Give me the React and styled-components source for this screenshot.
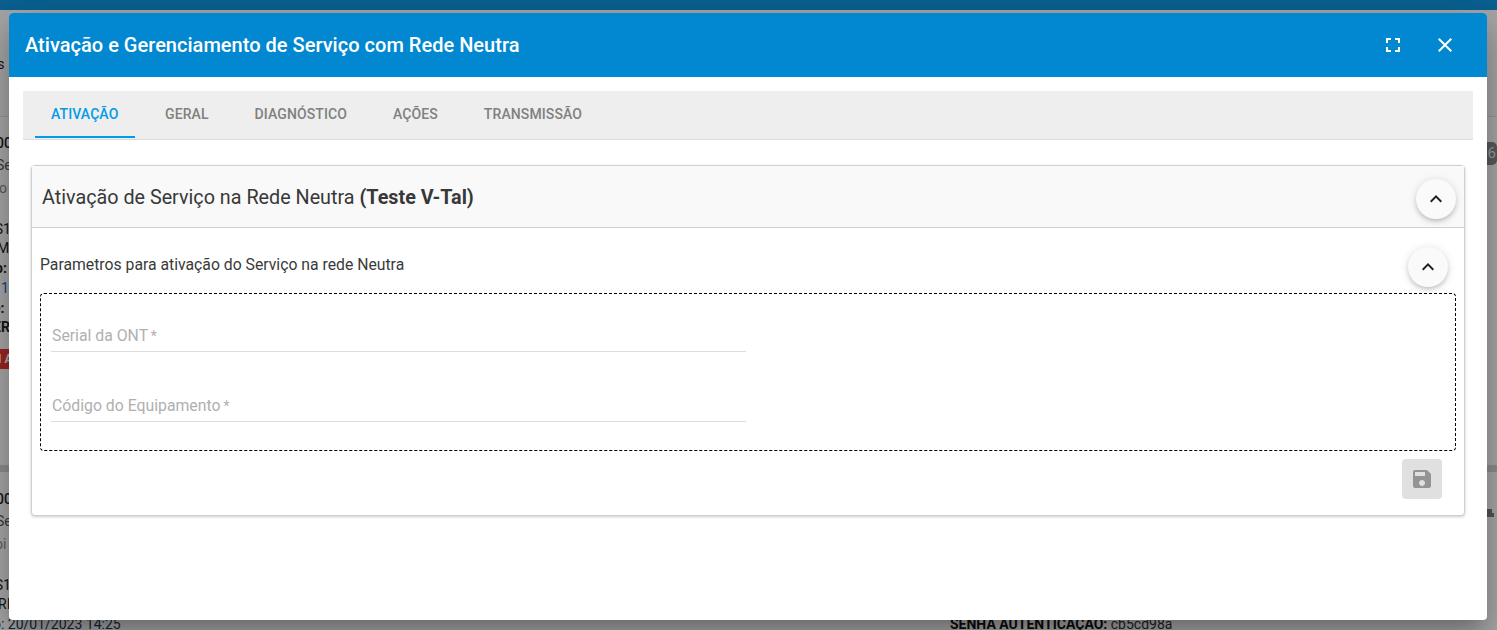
import React from "react";
import styled, { createGlobalStyle } from "styled-components";
import { MdFullscreen, MdClose, MdKeyboardArrowUp, MdSave } from "react-icons/md";

const Global = createGlobalStyle`
  html, body { margin: 0; padding: 0; height: 100%; background: #fff; overflow: hidden; }
  * { box-sizing: border-box; }
  body { font-family: Roboto, "Liberation Sans", sans-serif; }
`;

const Page = styled.div`
  position: relative;
  width: 1497px;
  height: 630px;
  overflow: hidden;
  display: flex;
  flex-direction: column;
  background: #fff;
  color: #222;
  font-size: 14px;
`;
const TopBar = styled.div`
  flex: 0 0 10px;
  background: #0f8fd6;
`;
const SubHeader = styled.div`
  flex: 0 0 107px;
  background: #f5f5f5;
  border-bottom: 1px solid #e0e0e0;
  padding-top: 45px;
`;
const ListCard = styled.div`
  position: relative;
  flex: 0 0 ${(p) => p.$h}px;
  padding-top: ${(p) => p.$pad}px;
  background: #f8f8f8;
`;
const Divider = styled.div`
  flex: 0 0 7px;
  background: #d2d2d2;
`;
const Line = styled.div`
  height: 18px;
  line-height: 18px;
  white-space: nowrap;
  margin-top: ${(p) => p.$mt || 0}px;
  margin-left: ${(p) => p.$shift || 0}px;
  color: ${(p) => p.$color || "#222"};
  font-weight: ${(p) => p.$weight || 400};
`;
const DateRow = styled(Line)`
  display: flex;
  color: #1b3a57;
  height: 18px;
`;
const Strong = styled.b`
  font-weight: 700;
  color: #111;
`;
const RightValue = styled.span`
  position: absolute;
  left: 950px;
  color: #333;
`;
const RedBadge = styled.div`
  margin-top: 13px;
  margin-left: -36px;
  width: 80px;
  height: 20px;
  line-height: 20px;
  background: #e53935;
  color: #fff;
  font-size: 12px;
  font-weight: 700;
  text-align: left;
  white-space: nowrap;
  padding-left: 34px;
`;
const SideBadge = styled.div`
  position: absolute;
  right: 0;
  top: 25px;
  width: 24px;
  height: 23px;
  border-radius: 5px;
  background: #858585;
  color: #dfe6ee;
  font-size: 15px;
  line-height: 23px;
  text-align: right;
  padding-right: 1px;
`;
const SideGlyph = styled.svg`
  position: absolute;
  left: 1487px;
  top: 37px;
  width: 7px;
  height: 8px;
  fill: #7c7c7c;
`;
const Overlay = styled.div`
  position: absolute;
  inset: 0;
  background: rgba(0, 0, 0, 0.32);
`;
const Modal = styled.div`
  position: absolute;
  left: 9px;
  top: 13px;
  width: 1478px;
  height: 607px;
  background: #fff;
  border-radius: 4px;
  overflow: hidden;
  box-shadow: 0 11px 15px -7px rgba(0, 0, 0, 0.2), 0 24px 38px 3px rgba(0, 0, 0, 0.14),
    0 9px 46px 8px rgba(0, 0, 0, 0.12);
  display: flex;
  flex-direction: column;
`;
const ModalHeader = styled.header`
  flex: 0 0 64px;
  background: #0288d1;
  color: #fff;
  display: flex;
  align-items: center;
  padding: 0 30px 0 16px;
`;
const ModalTitle = styled.h1`
  flex: 1;
  margin: 0;
  font-size: 20px;
  font-weight: 500;
  line-height: 24px;
  letter-spacing: 0.02px;
`;
const HeaderActions = styled.div`
  display: flex;
  gap: 28px;
`;
const IconButton = styled.button`
  width: 24px;
  height: 24px;
  padding: 0;
  border: 0;
  background: none;
  color: #fff;
  display: block;
  svg { display: block; }
`;
const ModalBody = styled.div`
  padding: 14px;
  flex: 1;
`;
const TabBar = styled.nav`
  height: 49px;
  background: #eeeeee;
  border-bottom: 1px solid #dcdcdc;
  display: flex;
  gap: 14px;
  padding-left: 12px;
`;
const Tab = styled.div`
  min-width: ${(p) => (p.$active ? "100px" : "0")};
  height: 47px;
  padding: 0 16px;
  display: flex;
  align-items: center;
  font-size: 14px;
  font-weight: 500;
  letter-spacing: 0.1px;
  color: ${(p) => (p.$active ? "#039be5" : "#808080")};
  border-bottom: 2px solid ${(p) => (p.$active ? "#039be5" : "transparent")};
`;
const Card = styled.section`
  margin: 25px 8px 0;
  height: 351px;
  border: 1px solid #cfcfcf;
  border-radius: 4px;
  box-shadow: 0 1px 3px rgba(0, 0, 0, 0.2);
  background: #fff;
`;
const CardHeader = styled.div`
  height: 62px;
  background: #f9f9f9;
  border-bottom: 1px solid #d0d0d0;
  display: flex;
  align-items: flex-start;
  justify-content: space-between;
  padding: 13px 8px 0 10px;
`;
const CardTitle = styled.h2`
  margin: 7px 0 0;
  font-size: 19.75px;
  line-height: 24px;
  font-weight: 400;
  color: #383838;
  b { font-weight: 700; }
`;
const RoundButton = styled.button`
  width: 40px;
  height: 40px;
  border: 0;
  padding: 0;
  border-radius: 50%;
  background: #fafafa;
  color: #212121;
  box-shadow: 0 3px 5px -1px rgba(0, 0, 0, 0.2), 0 1px 10px 0 rgba(0, 0, 0, 0.12);
  display: flex;
  align-items: center;
  justify-content: center;
`;
const CardContent = styled.div`
  padding: 0 8px;
`;
const ParamRow = styled.div`
  height: 65px;
  padding: 19px 8px 0 0;
  display: flex;
  justify-content: space-between;
  align-items: flex-start;
`;
const ParamText = styled.div`
  margin-top: 8px;
  font-size: 15.75px;
  line-height: 20px;
  color: #3a3a3a;
`;
const DashedBox = styled.div`
  height: 158px;
  border: 1px dashed #000;
  border-radius: 4px;
  padding: 12px 10px 0;
  display: flex;
  flex-direction: column;
  gap: 24px;
`;
const Field = styled.div`
  width: 695px;
  height: 46px;
  border-bottom: 1px solid #dddddd;
  display: flex;
  align-items: flex-end;
  padding: 0 1px 5px;
`;
const FieldLabel = styled.label`
  font-size: 15.8px;
  line-height: 20px;
  color: #b0b0b0;
`;
const Asterisk = styled.span`
  margin-left: -1px;
  font-size: 14px;
`;
const CardFooter = styled.div`
  display: flex;
  justify-content: flex-end;
  padding: 8px 14px 0 0;
`;
const SaveButton = styled.button`
  width: 40px;
  height: 40px;
  border: 0;
  padding: 0;
  border-radius: 4px;
  background: #e0e0e0;
  color: #949494;
  display: flex;
  align-items: center;
  justify-content: center;
`;

const tabs = ["ATIVAÇÃO", "GERAL", "DIAGNÓSTICO", "AÇÕES", "TRANSMISSÃO"];

export default function App() {
  return (
    <>
      <Global />
      <Page>
        <TopBar />
        <SubHeader>
          <Line $shift={-40}>Ordens</Line>
        </SubHeader>
        <ListCard $h={348} $pad={17}>
          <Line $shift={-12} $weight={500}>000</Line>
          <Line $mt={4} $shift={-4} $color="#555">Se</Line>
          <Line $mt={5} $shift={-9} $color="#888">do</Line>
          <Line $mt={23} $shift={-15}>OS1</Line>
          <Line $mt={1} $shift={-12}>CM</Line>
          <Line $mt={2} $shift={-5} $weight={700}>o:</Line>
          <Line $mt={2} $shift={1} $color="#1565c0">1,</Line>
          <Line $mt={2} $shift={-7} $weight={700}>e:</Line>
          <Line $mt={1} $shift={-7} $weight={700}>ER</Line>
          <RedBadge>I A</RedBadge>
          <SideBadge>6</SideBadge>
        </ListCard>
        <Divider />
        <ListCard $h={158} $pad={18}>
          <Line $shift={-12} $weight={500}>000</Line>
          <Line $mt={4} $shift={-4} $color="#555">Se</Line>
          <Line $mt={5} $shift={-5} $color="#888">oi</Line>
          <Line $mt={23} $shift={-15}>OS1</Line>
          <Line $mt={1} $shift={-2}>RI</Line>
          <DateRow $mt={2} $shift={-7}>
            <span>o: 20/01/2023 14:25</span>
            <RightValue>
              <Strong>SENHA AUTENTICAÇÃO:</Strong> cb5cd98a
            </RightValue>
          </DateRow>
          <SideGlyph viewBox="0 0 7 8"><path d="M0 0h5v4h2v4H0z" /></SideGlyph>
        </ListCard>
        <Overlay />
        <Modal>
          <ModalHeader>
            <ModalTitle>Ativação e Gerenciamento de Serviço com Rede Neutra</ModalTitle>
            <HeaderActions>
              <IconButton aria-label="Tela cheia"><MdFullscreen size={24} /></IconButton>
              <IconButton aria-label="Fechar"><MdClose size={24} /></IconButton>
            </HeaderActions>
          </ModalHeader>
          <ModalBody>
            <TabBar>
              {tabs.map((t, i) => (
                <Tab key={t} $active={i === 0}>{t}</Tab>
              ))}
            </TabBar>
            <Card>
              <CardHeader>
                <CardTitle>
                  Ativação de Serviço na Rede Neutra <b>(Teste V-Tal)</b>
                </CardTitle>
                <RoundButton aria-label="Recolher"><MdKeyboardArrowUp size={24} /></RoundButton>
              </CardHeader>
              <CardContent>
                <ParamRow>
                  <ParamText>Parametros para ativação do Serviço na rede Neutra</ParamText>
                  <RoundButton aria-label="Recolher parâmetros"><MdKeyboardArrowUp size={24} /></RoundButton>
                </ParamRow>
                <DashedBox>
                  <Field><FieldLabel>Serial da ONT <Asterisk>*</Asterisk></FieldLabel></Field>
                  <Field><FieldLabel>Código do Equipamento <Asterisk>*</Asterisk></FieldLabel></Field>
                </DashedBox>
                <CardFooter>
                  <SaveButton aria-label="Salvar"><MdSave size={24} /></SaveButton>
                </CardFooter>
              </CardContent>
            </Card>
          </ModalBody>
        </Modal>
      </Page>
    </>
  );
}
